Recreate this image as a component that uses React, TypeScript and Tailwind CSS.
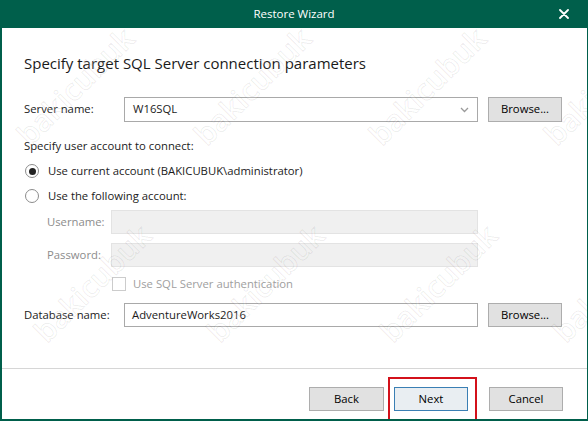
function Radio({ checked }: { checked?: boolean }) {
  return (
    <span className="ml-px flex h-[14px] w-[14px] shrink-0 items-center justify-center rounded-full border border-[#8c8c8c] bg-white">
      {checked && <span className="h-[7px] w-[7px] rounded-full bg-[#222]" />}
    </span>
  );
}

function Button({ label, className = "" }: { label: string; className?: string }) {
  return (
    <div
      className={`flex h-[24px] items-center justify-center border text-[11.3px] text-black ${
        className || "border-[#adadad] bg-[#e1e1e1]"
      }`}
    >
      {label}
    </div>
  );
}

// faint "bakicubuk" watermark laid over the screenshot
function Mark({ className }: { className: string }) {
  return (
    <span
      className={`pointer-events-none absolute -translate-x-1/2 -translate-y-1/2 -rotate-45 whitespace-nowrap font-['Open_Sans',sans-serif] text-[30px] font-semibold text-white/15 [-webkit-text-stroke:1px_rgba(0,0,0,0.075)] ${className}`}
    >
      bakicubuk
    </span>
  );
}

export default function App() {
  return (
    <div className="relative flex h-[421px] w-[588px] flex-col overflow-hidden border-b-2 border-l-2 border-r border-[#005f4b] bg-white font-['Open_Sans',sans-serif] text-[11.3px] text-[#1b1b1b]">
      {/* title bar */}
      <div className="relative -ml-[2px] -mr-px flex h-[28px] shrink-0 items-center justify-center bg-[#005f4b] text-[11.5px] text-white">
        Restore Wizard
        <svg className="absolute right-[19px] top-[9px]" width="10" height="10" viewBox="0 0 10 10">
          <path d="M1 1L9 9M9 1L1 9" stroke="white" strokeWidth="1.8" strokeLinecap="round" />
        </svg>
      </div>

      <div className="flex flex-col pl-[22px]">
        <div className="mt-[25px] h-[20px] text-[15px] leading-[20px] text-[#1a1a1a]">
          Specify target SQL Server connection parameters
        </div>

        <div className="mt-[24px] flex h-[25px] items-center">
          <div className="w-[100px]">Server name:</div>
          <div className="flex h-full w-[354px] items-center justify-between border border-[#a9a9a9] bg-white pl-[8px] pr-[8px]">
            <span>W16SQL</span>
            <svg width="9" height="6" viewBox="0 0 9 6">
              <path d="M1 1L4.5 4.5L8 1" fill="none" stroke="#9a9a9a" strokeWidth="1.3" />
            </svg>
          </div>
          <div className="ml-[10px] w-[74px]">
            <Button label="Browse..." className="h-[25px] border-[#adadad] bg-[#e1e1e1]" />
          </div>
        </div>

        <div className="mt-[16px] h-[16px] leading-[16px]">Specify user account to connect:</div>

        <div className="mt-[9px] flex h-[16px] items-center gap-[9px] leading-[16px]">
          <Radio checked />
          <span>Use current account (BAKICUBUK\administrator)</span>
        </div>
        <div className="mt-[9px] flex h-[16px] items-center gap-[9px] leading-[16px]">
          <Radio />
          <span>Use the following account:</span>
        </div>

        <div className="mt-[6px] flex h-[24px] items-center pl-[23px] text-[#8c8c8c]">
          <div className="w-[64px]">Username:</div>
          <div className="h-full w-[367px] border border-[#e3e3e3] bg-[#f0f0f0]" />
        </div>
        <div className="mt-[9px] flex h-[24px] items-center pl-[23px] text-[#8c8c8c]">
          <div className="w-[64px]">Password:</div>
          <div className="h-full w-[367px] border border-[#e3e3e3] bg-[#f0f0f0]" />
        </div>

        <div className="mt-[10px] flex h-[14px] items-center gap-[7px] pl-[88px] text-[#a0a0a0]">
          <span className="h-[14px] w-[14px] border border-[#cccccc] bg-white" />
          <span>Use SQL Server authentication</span>
        </div>

        <div className="mt-[12px] flex h-[24px] items-center">
          <div className="w-[100px]">Database name:</div>
          <div className="flex h-full w-[354px] items-center border border-[#a9a9a9] bg-white pl-[7px]">
            AdventureWorks2016
          </div>
          <div className="ml-[10px] w-[74px]">
            <Button label="Browse..." />
          </div>
        </div>
      </div>

      <div className="flex-1" />

      {/* footer */}
      <div className="flex h-[51px] shrink-0 justify-end gap-[10px] border-t border-[#d6d6d6] pr-[24px] pt-[18px]">
        <div className="w-[75px]">
          <Button label="Back" />
        </div>
        <div className="relative mr-[11px] w-[74px]">
          <Button label="Next" className="border-[#3a7fb4] bg-[#e9eef2]" />
          <div className="absolute -bottom-[6px] -left-[6px] -right-[9px] -top-[10px] border-2 border-[#d3111b]" />
        </div>
        <div className="w-[74px]">
          <Button label="Cancel" />
        </div>
      </div>

      <Mark className="left-[73px] top-[86px]" />
      <Mark className="left-[250px] top-[86px]" />
      <Mark className="left-[425px] top-[86px]" />
      <Mark className="left-[600px] top-[86px]" />
      <Mark className="left-[90px] top-[283px]" />
      <Mark className="left-[263px] top-[283px]" />
      <Mark className="left-[436px] top-[283px]" />
      <Mark className="left-[609px] top-[283px]" />
    </div>
  );
}
